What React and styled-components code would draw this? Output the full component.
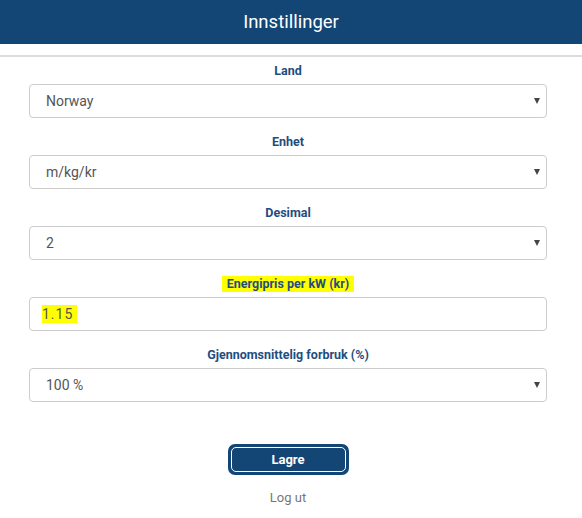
import styled, { createGlobalStyle } from 'styled-components';

const GlobalStyle = createGlobalStyle`
    body {
        margin: 0;
        background: #fff;
        font-family: Roboto, 'Liberation Sans', sans-serif;
    }
`;

const Header = styled.header`
    height: 44px;
    background-color: #134675;
    color: #fff;
    display: flex;
    align-items: center;
    justify-content: center;
    font-size: 18.5px;
`;

const Rule = styled.hr`
    margin: 11px 0 0;
    border: 0;
    height: 2px;
    background: #dcdcdc;
`;

const Form = styled.form`
    display: flex;
    flex-direction: column;
    gap: 16px;
    margin: 6px 35px 0 29px;
`;

const Field = styled.div`
    display: flex;
    flex-direction: column;
    align-items: center;
    gap: 5px;
`;

const Label = styled.label`
    font-size: 12.5px;
    font-weight: bold;
    color: #1f4d80;
    line-height: 16px;
    padding: 0 5px;
    background: ${p => (p.$marked ? '#ffff00' : 'transparent')};
`;

const Box = styled.div`
    box-sizing: border-box;
    width: 100%;
    height: 34px;
    border: 1px solid #ccc;
    border-radius: 4px;
    display: flex;
    align-items: center;
    justify-content: space-between;
    padding: 0 ${p => (p.$input ? '12px' : '16px')};
    font-size: 14px;
    color: #555;
`;

const Marked = styled.span`
    background: #ffff00;
    padding: 1px 4px 1px 0;
    letter-spacing: 1px;
`;

const Caret = styled.span`
    width: 0;
    height: 0;
    border-left: 3.5px solid transparent;
    border-right: 3.5px solid transparent;
    border-top: 6px solid #444;
    margin-right: -10px;
`;

const Actions = styled.div`
    display: flex;
    flex-direction: column;
    align-items: center;
    margin: 42px 35px 0 29px;
    gap: 15px;
`;

const SaveButton = styled.button`
    width: 121px;
    height: 31px;
    padding: 3px;
    border: 0;
    border-radius: 7px;
    background: #134675;
    cursor: pointer;
    display: flex;
`;

const SaveInner = styled.span`
    flex: 1;
    border: 1px solid #fff;
    border-radius: 5px;
    color: #fff;
    font-family: Roboto, 'Liberation Sans', sans-serif;
    font-weight: bold;
    font-size: 13px;
    display: flex;
    align-items: center;
    justify-content: center;
`;

const LogOut = styled.a`
    font-size: 13px;
    color: #777;
    text-decoration: none;
    cursor: pointer;
`;

const fields = [
    { label: 'Land', value: 'Norway' },
    { label: 'Enhet', value: 'm/kg/kr' },
    { label: 'Desimal', value: '2' },
    { label: 'Energipris per kW (kr)', value: '1.15', input: true },
    { label: 'Gjennomsnittelig forbruk (%)', value: '100 %' },
];

function App() {
    return (
        <>
            <GlobalStyle />
            <Header>Innstillinger</Header>
            <Rule />
            <Form>
                {fields.map(f => (
                    <Field key={f.label}>
                        <Label $marked={f.input}>{f.label}</Label>
                        <Box $input={f.input}>
                            {f.input ? <Marked>{f.value}</Marked> : <span>{f.value}</span>}
                            {!f.input && <Caret />}
                        </Box>
                    </Field>
                ))}
            </Form>
            <Actions>
                <SaveButton type="button"><SaveInner>Lagre</SaveInner></SaveButton>
                <LogOut>Log ut</LogOut>
            </Actions>
        </>
    );
}

export default App;
